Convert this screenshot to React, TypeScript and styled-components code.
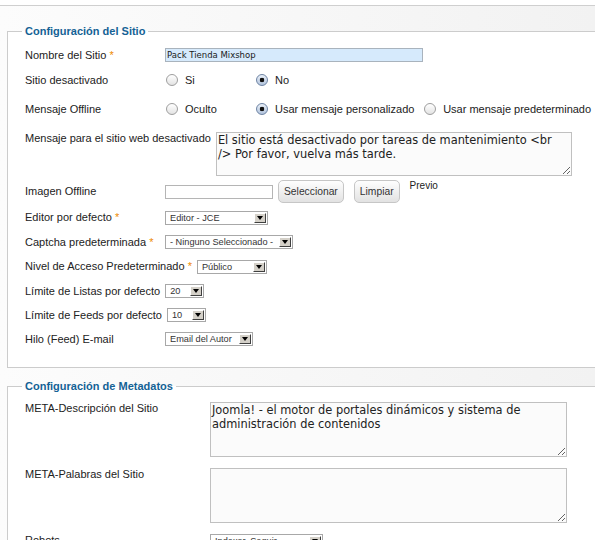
import React from "react";
import styled, { createGlobalStyle } from "styled-components";

const Global = createGlobalStyle`
  html, body { margin: 0; padding: 0; background: #fff; overflow: hidden; }
  body { font-family: "Liberation Sans", Arial, sans-serif; }
`;

const Page = styled.div`
  padding-top: 5px;
`;

const Main = styled.div`
  border-top: 1px solid #cfcfcf;
  background: linear-gradient(to right, #fcfcfc, #f2f2f2);
  padding: 18px 0 0 7px;
  height: 620px;
  overflow: hidden;
`;

const Fieldset = styled.fieldset<{ $mt?: number; $pb?: number }>`
  margin: ${(p) => p.$mt ?? 0}px -12px 0 0;
  padding: 0 0 ${(p) => p.$pb ?? 0}px 14px;
  border: 1px solid #cccccc;
  background: #fff;
  min-width: 0;
`;

const Legend = styled.legend`
  padding: 0 3px;
  font: bold 11px/14px "Liberation Sans", Arial, sans-serif;
  color: #146295;
`;

const List = styled.div<{ $pt: number; $gap?: number }>`
  display: flex;
  flex-direction: column;
  padding: ${(p) => p.$pt}px 0 0 3px;
  gap: ${(p) => p.$gap ?? 0}px;
`;

const Row = styled.div<{ $h?: number; $top?: boolean; $pt?: number }>`
  display: flex;
  align-items: ${(p) => (p.$top ? "flex-start" : "center")};
  height: ${(p) => (p.$h ? `${p.$h}px` : "auto")};
  padding-top: ${(p) => p.$pt ?? 0}px;
  box-sizing: border-box;
`;

const Label = styled.label<{ $w: number }>`
  min-width: ${(p) => p.$w}px;
  margin-right: 5px;
  font-size: 11px;
  line-height: 13px;
  color: #222;
  white-space: nowrap;
`;

const Star = styled.span`
  color: #ee8a00;
`;

const TextInput = styled.input<{ $w: number; $blue?: boolean }>`
  width: ${(p) => p.$w}px;
  height: 14px;
  box-sizing: border-box;
  margin: 0;
  padding: 0 1px;
  border: 1px solid ${(p) => (p.$blue ? "#a9b3bd" : "#b5b5b5")};
  background: ${(p) => (p.$blue ? "#d6eafc" : "#fff")};
  font: 8.5px/12px "DejaVu Sans", Verdana, sans-serif;
  color: #1a1a1a;
  outline: none;
`;

const TextArea = styled.textarea<{ $w: number; $h: number }>`
  width: ${(p) => p.$w}px;
  height: ${(p) => p.$h}px;
  box-sizing: border-box;
  margin: 0;
  padding: 0 18px 0 1px;
  border: 1px solid #c0c0c0;
  background: #fbfbfb;
  font: 11.4px/14px "DejaVu Sans", Verdana, sans-serif;
  color: #222;
  outline: none;
`;

const Radio = styled.input`
  appearance: none;
  width: 12px;
  height: 12px;
  margin: 0 7px 0 1px;
  box-sizing: border-box;
  border-radius: 50%;
  border: 1px solid #9e9e9e;
  background: linear-gradient(#ffffff, #e3e3e3);
  flex: none;
  &:checked {
    border-color: #6d83a3;
    background: radial-gradient(circle, #111 0 2px, transparent 2.6px),
      linear-gradient(#eaf0f8, #b2c4dd);
  }
`;

const RadioText = styled.label`
  min-width: 60px;
  padding-right: 10px;
  font-size: 11px;
  line-height: 13px;
  color: #222;
  white-space: nowrap;
`;

const SelectBox = styled.span<{ $w: number }>`
  display: inline-flex;
  align-items: stretch;
  width: ${(p) => p.$w}px;
  height: 14px;
  box-sizing: border-box;
  border: 1px solid #a8a8a8;
  background: #fff;
`;

const NativeSelect = styled.select`
  appearance: none;
  flex: 1;
  min-width: 0;
  height: 12px;
  margin: 0;
  padding: 0 0 0 4px;
  border: 0;
  outline: none;
  background: transparent;
  font: 9.2px/12px "Liberation Sans", Arial, sans-serif;
  color: #333;
`;

const Arrow = styled.span`
  width: 12px;
  margin: 1px 1px 1px 0;
  box-sizing: border-box;
  background: #d4d0c8;
  border-top: 1px solid #fff;
  border-left: 1px solid #fff;
  border-right: 1px solid #404040;
  border-bottom: 1px solid #404040;
  display: flex;
  align-items: center;
  justify-content: center;
  &::after {
    content: "";
    border-left: 3.5px solid transparent;
    border-right: 3.5px solid transparent;
    border-top: 4px solid #000;
  }
`;

const Button = styled.button<{ $ml: number }>`
  height: 23px;
  margin: 0 0 0 ${(p) => p.$ml}px;
  padding: 0 5px;
  border: 1px solid #c6c6c6;
  border-radius: 5px;
  background: linear-gradient(#fefefe, #e2e2e2);
  font: 10.3px "Liberation Sans", Arial, sans-serif;
  color: #333;
`;

const Preview = styled.span`
  align-self: flex-start;
  margin: 2px 0 0 10px;
  font-size: 10px;
  line-height: 12px;
  color: #222;
`;

const Select = ({ w, value }: { w: number; value: string }) => (
  <SelectBox $w={w}>
    <NativeSelect defaultValue={value}>
      <option>{value}</option>
    </NativeSelect>
    <Arrow />
  </SelectBox>
);

const RadioOpt = ({ name, text, checked }: { name: string; text: string; checked?: boolean }) => (
  <>
    <Radio type="radio" name={name} defaultChecked={checked} />
    <RadioText>{text}</RadioText>
  </>
);

const SelectRow = ({ h, label, req, w, value }: { h: number; label: string; req?: boolean; w: number; value: string }) => (
  <Row $h={h}>
    <Label $w={135}>
      {label}
      {req && <Star> *</Star>}
    </Label>
    <Select w={w} value={value} />
  </Row>
);

export default function App() {
  return (
    <Page>
      <Global />
      <Main>
        <Fieldset $pb={16}>
          <Legend>Configuración del Sitio</Legend>
          <List $pt={5}>
            <Row $h={24}>
              <Label $w={135}>
                Nombre del Sitio<Star> *</Star>
              </Label>
              <TextInput $w={258} $blue defaultValue="Pack Tienda Mixshop" />
            </Row>
            <Row $h={26}>
              <Label $w={135}>Sitio desactivado</Label>
              <RadioOpt name="offline" text="Si" />
              <RadioOpt name="offline" text="No" checked />
            </Row>
            <Row $h={32}>
              <Label $w={135}>Mensaje Offline</Label>
              <RadioOpt name="msg" text="Oculto" />
              <RadioOpt name="msg" text="Usar mensaje personalizado" checked />
              <RadioOpt name="msg" text="Usar mensaje predeterminado" />
              <Star>*</Star>
            </Row>
            <Row $h={53} $top $pt={7}>
              <Label $w={135}>Mensaje para el sitio web desactivado</Label>
              <TextArea
                $w={356}
                $h={44}
                defaultValue="El sitio está desactivado por tareas de mantenimiento <br /> Por favor, vuelva más tarde."
              />
            </Row>
            <Row $h={27}>
              <Label $w={135}>Imagen Offline</Label>
              <TextInput $w={108} defaultValue="" />
              <Button $ml={5}>Seleccionar</Button>
              <Button $ml={10}>Limpiar</Button>
              <Preview>Previo</Preview>
            </Row>
            <SelectRow h={25} label="Editor por defecto" req w={103} value="Editor - JCE" />
            <SelectRow h={24} label="Captcha predeterminada" req w={128} value="- Ninguno Seleccionado -" />
            <SelectRow h={25} label="Nivel de Acceso Predeterminado" req w={70} value="Público" />
            <SelectRow h={24} label="Límite de Listas por defecto" w={39} value="20" />
            <SelectRow h={24} label="Límite de Feeds por defecto" w={39} value="10" />
            <SelectRow h={24} label="Hilo (Feed) E-mail" w={88} value="Email del Autor" />
          </List>
        </Fieldset>
        <Fieldset $mt={11} $pb={20}>
          <Legend>Configuración de Metadatos</Legend>
          <List $pt={9} $gap={11}>
            <Row $top>
              <Label $w={180}>META-Descripción del Sitio</Label>
              <TextArea
                $w={357}
                $h={55}
                defaultValue="Joomla! - el motor de portales dinámicos y sistema de administración de contenidos"
              />
            </Row>
            <Row $top>
              <Label $w={180}>META-Palabras del Sitio</Label>
              <TextArea $w={357} $h={55} defaultValue="" />
            </Row>
            <Row $top>
              <Label $w={180}>Robots</Label>
              <Select w={113} value="Indexar, Seguir" />
            </Row>
          </List>
        </Fieldset>
      </Main>
    </Page>
  );
}
